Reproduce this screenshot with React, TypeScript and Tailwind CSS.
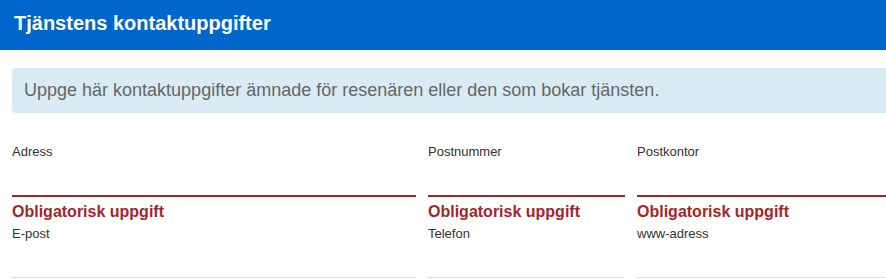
import * as React from 'react'

// ── Types ─────────────────────────────────────────────────────────────────────
interface Field {
  id:     string
  label:  string
  error?: string
}

const rows: Field[][] = [
  [
    { id: 'adress',     label: 'Adress',     error: 'Obligatorisk uppgift' },
    { id: 'postnummer', label: 'Postnummer', error: 'Obligatorisk uppgift' },
    { id: 'postkontor', label: 'Postkontor', error: 'Obligatorisk uppgift' },
  ],
  [
    { id: 'epost',   label: 'E-post' },
    { id: 'telefon', label: 'Telefon' },
    { id: 'www',     label: 'www-adress' },
  ],
]

// ── Field ─────────────────────────────────────────────────────────────────────
function FormField({ field, first }: { field: Field; first: boolean }) {
  const invalid = !!field.error
  return (
    <div className="flex flex-col min-w-0">
      <label
        htmlFor={field.id}
        className={
          (first ? 'mt-0 ' : 'mt-[3px] ') +
          'text-[13px] leading-[18px] text-[#333333]'
        }
      >
        {field.label}
      </label>
      <input
        id={field.id}
        type="text"
        className={
          invalid
            ? 'h-[36px] w-full bg-transparent border-b-2 border-[#a3262b] outline-none'
            : 'h-[35px] w-full bg-transparent border-b border-[#dddddd] outline-none'
        }
      />
      {invalid && (
        <span className="mt-[5px] text-[16px] leading-[20px] font-bold text-[#a3262b]">
          {field.error}
        </span>
      )}
    </div>
  )
}

// ── App ───────────────────────────────────────────────────────────────────────
export default function App() {
  return (
    <div className="w-full overflow-hidden bg-white font-['Liberation_Sans',Arial,sans-serif]">
      <div className="w-[960px]">
        {/* Header */}
        <div className="h-[50px] bg-[#0066cc] px-[14px]">
          <h1 className="text-[20px] leading-[46px] font-bold text-white">
            Tjänstens kontaktuppgifter
          </h1>
        </div>

        {/* Info */}
        <div className="mt-[18px] ml-3 rounded-[4px] bg-[#d9ebf5] px-3 py-3">
          <p className="text-[18px] leading-[21px] text-[#666666]">
            Uppge här kontaktuppgifter ämnade för resenären eller den som bokar tjänsten.
          </p>
        </div>

        {/* Form */}
        <div className="mt-[30px] px-3 flex flex-col">
          {rows.map((row, i) => (
            <div key={i} className="grid grid-cols-[404px_197px_1fr] gap-x-3">
              {row.map(f => (
                <FormField key={f.id} field={f} first={i === 0} />
              ))}
            </div>
          ))}
        </div>
      </div>
    </div>
  )
}
